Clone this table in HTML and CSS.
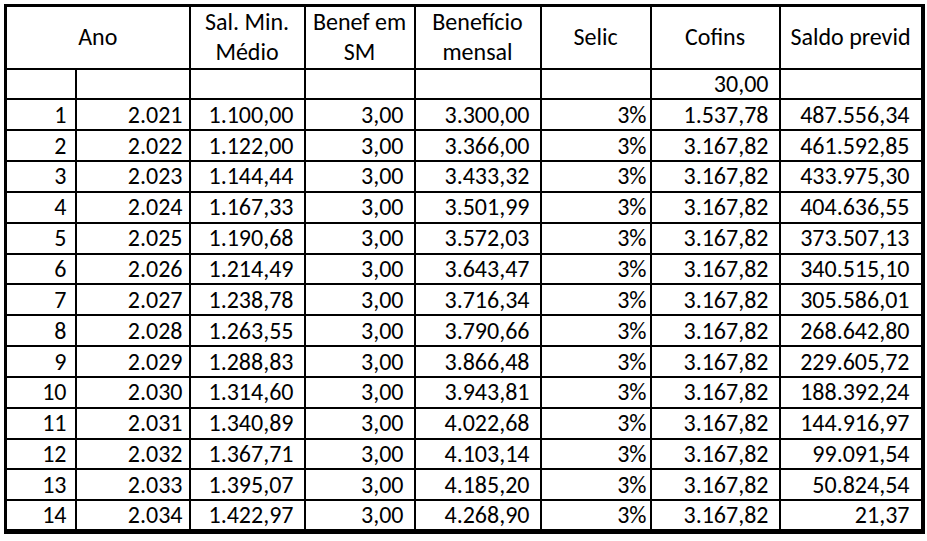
FILE: index.html
```html
<!DOCTYPE html>
<html lang="pt">
<head>
<meta charset="utf-8">
<title>Tabela</title>
<link rel="stylesheet" href="styles.css">
</head>
<body>
<table class="sheet">
  <colgroup>
    <col class="c1"><col class="c2"><col class="c3"><col class="c4"><col class="c5"><col class="c6"><col class="c7"><col class="c8">
  </colgroup>
  <thead>
    <tr class="head">
      <th colspan="2">Ano</th>
      <th>Sal. Min.<br>Médio</th>
      <th>Benef em<br>SM</th>
      <th>Benefício<br>mensal</th>
      <th>Selic</th>
      <th>Cofins</th>
      <th>Saldo previd</th>
    </tr>
  </thead>
  <tbody>
    <tr class="row"><td></td><td></td><td></td><td></td><td></td><td></td><td>30,00</td><td></td></tr>
    <tr class="row"><td>1</td><td>2.021</td><td>1.100,00</td><td>3,00</td><td>3.300,00</td><td class="pct">3%</td><td>1.537,78</td><td>487.556,34</td></tr>
    <tr class="row"><td>2</td><td>2.022</td><td>1.122,00</td><td>3,00</td><td>3.366,00</td><td class="pct">3%</td><td>3.167,82</td><td>461.592,85</td></tr>
    <tr class="row"><td>3</td><td>2.023</td><td>1.144,44</td><td>3,00</td><td>3.433,32</td><td class="pct">3%</td><td>3.167,82</td><td>433.975,30</td></tr>
    <tr class="row"><td>4</td><td>2.024</td><td>1.167,33</td><td>3,00</td><td>3.501,99</td><td class="pct">3%</td><td>3.167,82</td><td>404.636,55</td></tr>
    <tr class="row"><td>5</td><td>2.025</td><td>1.190,68</td><td>3,00</td><td>3.572,03</td><td class="pct">3%</td><td>3.167,82</td><td>373.507,13</td></tr>
    <tr class="row"><td>6</td><td>2.026</td><td>1.214,49</td><td>3,00</td><td>3.643,47</td><td class="pct">3%</td><td>3.167,82</td><td>340.515,10</td></tr>
    <tr class="row"><td>7</td><td>2.027</td><td>1.238,78</td><td>3,00</td><td>3.716,34</td><td class="pct">3%</td><td>3.167,82</td><td>305.586,01</td></tr>
    <tr class="row"><td>8</td><td>2.028</td><td>1.263,55</td><td>3,00</td><td>3.790,66</td><td class="pct">3%</td><td>3.167,82</td><td>268.642,80</td></tr>
    <tr class="row"><td>9</td><td>2.029</td><td>1.288,83</td><td>3,00</td><td>3.866,48</td><td class="pct">3%</td><td>3.167,82</td><td>229.605,72</td></tr>
    <tr class="row"><td>10</td><td>2.030</td><td>1.314,60</td><td>3,00</td><td>3.943,81</td><td class="pct">3%</td><td>3.167,82</td><td>188.392,24</td></tr>
    <tr class="row"><td>11</td><td>2.031</td><td>1.340,89</td><td>3,00</td><td>4.022,68</td><td class="pct">3%</td><td>3.167,82</td><td>144.916,97</td></tr>
    <tr class="row"><td>12</td><td>2.032</td><td>1.367,71</td><td>3,00</td><td>4.103,14</td><td class="pct">3%</td><td>3.167,82</td><td>99.091,54</td></tr>
    <tr class="row"><td>13</td><td>2.033</td><td>1.395,07</td><td>3,00</td><td>4.185,20</td><td class="pct">3%</td><td>3.167,82</td><td>50.824,54</td></tr>
    <tr class="row"><td>14</td><td>2.034</td><td>1.422,97</td><td>3,00</td><td>4.268,90</td><td class="pct">3%</td><td>3.167,82</td><td>21,37</td></tr>
  </tbody>
</table>
</body>
</html>
```

FILE: styles.css
```css
html, body {
  margin: 0;
  background: #fff;
}
body {
  padding: 4px 0 0 4px;
  font-family: Carlito, Calibri, "Open Sans", sans-serif;
  font-size: 24px;
  color: #000;
}
.sheet {
  border-collapse: collapse;
  table-layout: fixed;
  width: 917px;
  border-style: solid;
  border-color: #000;
  border-width: 3px 4px 5px 3px;
}
.c1 { width: 70px; }
.c2 { width: 114px; }
.c3 { width: 115px; }
.c4 { width: 110px; }
.c5 { width: 126px; }
.c6 { width: 110px; }
.c7 { width: 129px; }
.c8 { width: 143px; }
.sheet th,
.sheet td {
  border: 2px solid #000;
  padding: 0 10px 0 0;
  white-space: nowrap;
  overflow: hidden;
}
.sheet th {
  font-weight: normal;
  text-align: center;
  line-height: 30px;
  padding: 0;
}
.head { height: 63px; }
.row { height: 30.85px; }
.sheet td {
  text-align: right;
  line-height: 26px;
}
.sheet td.pct { padding-right: 3px; }
.sheet td:first-child { padding-right: 8px; }
.sheet td:nth-child(2) { padding-right: 6px; }
.sheet td:last-child { padding-right: 11px; }
```
